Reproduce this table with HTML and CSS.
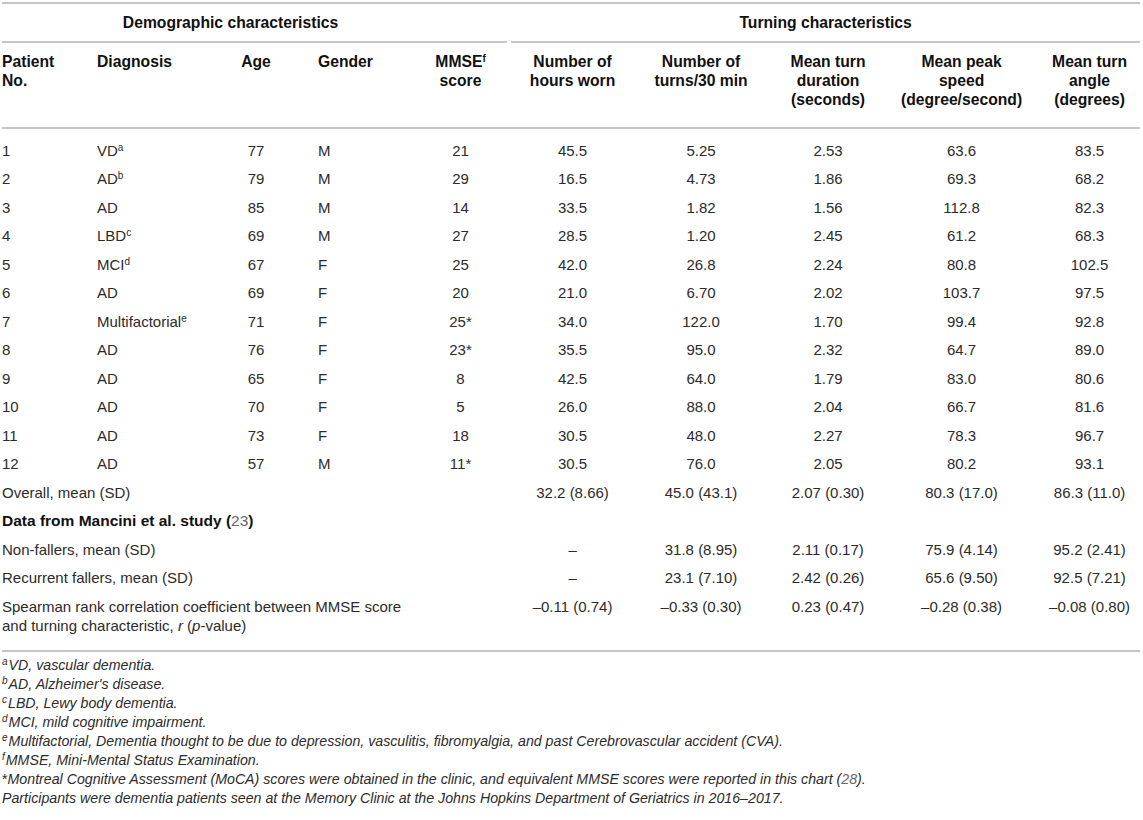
FILE: index.html
```html
<!DOCTYPE html>
<html lang="en">
<head>
<meta charset="utf-8">
<title>Table</title>
<link rel="stylesheet" href="styles.css">
</head>
<body>
<div class="page">
<table class="tbl">
  <colgroup>
    <col class="c-pt"><col class="c-dx"><col class="c-age"><col class="c-sex"><col class="c-mmse">
    <col class="c-hrs"><col class="c-trn"><col class="c-dur"><col class="c-spd"><col class="c-ang">
  </colgroup>
  <thead>
    <tr>
      <th colspan="5" class="grp grp-l"><div>Demographic characteristics</div></th>
      <th colspan="5" class="grp grp-r"><div>Turning characteristics</div></th>
    </tr>
    <tr class="hdr">
      <th class="l">Patient<br>No.</th>
      <th class="l">Diagnosis</th>
      <th class="c">Age</th>
      <th class="l sex">Gender</th>
      <th class="c">MMSE<sup>f</sup><br>score</th>
      <th class="c">Number of<br>hours worn</th>
      <th class="c">Number of<br>turns/30 min</th>
      <th class="c">Mean turn<br>duration<br>(seconds)</th>
      <th class="c">Mean peak<br>speed<br>(degree/second)</th>
      <th class="c ang">Mean turn<br>angle<br>(degrees)</th>
    </tr>
  </thead>
  <tbody>
    <tr class="first"><td class="l">1</td><td class="l">VD<sup>a</sup></td><td class="c">77</td><td class="l sex">M</td><td class="c">21</td><td class="c">45.5</td><td class="c">5.25</td><td class="c">2.53</td><td class="c">63.6</td><td class="c ang">83.5</td></tr>
    <tr><td class="l">2</td><td class="l">AD<sup>b</sup></td><td class="c">79</td><td class="l sex">M</td><td class="c">29</td><td class="c">16.5</td><td class="c">4.73</td><td class="c">1.86</td><td class="c">69.3</td><td class="c ang">68.2</td></tr>
    <tr><td class="l">3</td><td class="l">AD</td><td class="c">85</td><td class="l sex">M</td><td class="c">14</td><td class="c">33.5</td><td class="c">1.82</td><td class="c">1.56</td><td class="c">112.8</td><td class="c ang">82.3</td></tr>
    <tr><td class="l">4</td><td class="l">LBD<sup>c</sup></td><td class="c">69</td><td class="l sex">M</td><td class="c">27</td><td class="c">28.5</td><td class="c">1.20</td><td class="c">2.45</td><td class="c">61.2</td><td class="c ang">68.3</td></tr>
    <tr><td class="l">5</td><td class="l">MCI<sup>d</sup></td><td class="c">67</td><td class="l sex">F</td><td class="c">25</td><td class="c">42.0</td><td class="c">26.8</td><td class="c">2.24</td><td class="c">80.8</td><td class="c ang">102.5</td></tr>
    <tr><td class="l">6</td><td class="l">AD</td><td class="c">69</td><td class="l sex">F</td><td class="c">20</td><td class="c">21.0</td><td class="c">6.70</td><td class="c">2.02</td><td class="c">103.7</td><td class="c ang">97.5</td></tr>
    <tr><td class="l">7</td><td class="l">Multifactorial<sup>e</sup></td><td class="c">71</td><td class="l sex">F</td><td class="c">25*</td><td class="c">34.0</td><td class="c">122.0</td><td class="c">1.70</td><td class="c">99.4</td><td class="c ang">92.8</td></tr>
    <tr><td class="l">8</td><td class="l">AD</td><td class="c">76</td><td class="l sex">F</td><td class="c">23*</td><td class="c">35.5</td><td class="c">95.0</td><td class="c">2.32</td><td class="c">64.7</td><td class="c ang">89.0</td></tr>
    <tr><td class="l">9</td><td class="l">AD</td><td class="c">65</td><td class="l sex">F</td><td class="c">8</td><td class="c">42.5</td><td class="c">64.0</td><td class="c">1.79</td><td class="c">83.0</td><td class="c ang">80.6</td></tr>
    <tr><td class="l">10</td><td class="l">AD</td><td class="c">70</td><td class="l sex">F</td><td class="c">5</td><td class="c">26.0</td><td class="c">88.0</td><td class="c">2.04</td><td class="c">66.7</td><td class="c ang">81.6</td></tr>
    <tr><td class="l">11</td><td class="l">AD</td><td class="c">73</td><td class="l sex">F</td><td class="c">18</td><td class="c">30.5</td><td class="c">48.0</td><td class="c">2.27</td><td class="c">78.3</td><td class="c ang">96.7</td></tr>
    <tr><td class="l">12</td><td class="l">AD</td><td class="c">57</td><td class="l sex">M</td><td class="c">11*</td><td class="c">30.5</td><td class="c">76.0</td><td class="c">2.05</td><td class="c">80.2</td><td class="c ang">93.1</td></tr>
    <tr><td class="l" colspan="5">Overall, mean (SD)</td><td class="c">32.2 (8.66)</td><td class="c">45.0 (43.1)</td><td class="c">2.07 (0.30)</td><td class="c">80.3 (17.0)</td><td class="c ang">86.3 (11.0)</td></tr>
    <tr><td class="l sect" colspan="10">Data from Mancini et al. study (<a class="ref">23</a>)</td></tr>
    <tr><td class="l" colspan="5">Non-fallers, mean (SD)</td><td class="c">–</td><td class="c">31.8 (8.95)</td><td class="c">2.11 (0.17)</td><td class="c">75.9 (4.14)</td><td class="c ang">95.2 (2.41)</td></tr>
    <tr><td class="l" colspan="5">Recurrent fallers, mean (SD)</td><td class="c">–</td><td class="c">23.1 (7.10)</td><td class="c">2.42 (0.26)</td><td class="c">65.6 (9.50)</td><td class="c ang">92.5 (7.21)</td></tr>
    <tr class="last"><td class="l" colspan="5">Spearman rank correlation coefficient between MMSE score<br>and turning characteristic, <i>r</i> (<i>p</i>-value)</td><td class="c">–0.11 (0.74)</td><td class="c">–0.33 (0.30)</td><td class="c">0.23 (0.47)</td><td class="c">–0.28 (0.38)</td><td class="c ang">–0.08 (0.80)</td></tr>
  </tbody>
</table>
<div class="notes">
  <p><sup>a</sup>VD, vascular dementia.</p>
  <p><sup>b</sup>AD, Alzheimer's disease.</p>
  <p><sup>c</sup>LBD, Lewy body dementia.</p>
  <p><sup>d</sup>MCI, mild cognitive impairment.</p>
  <p><sup>e</sup>Multifactorial, Dementia thought to be due to depression, vasculitis, fibromyalgia, and past Cerebrovascular accident (CVA).</p>
  <p><sup>f</sup>MMSE, Mini-Mental Status Examination.</p>
  <p><span class="ast">*</span>Montreal Cognitive Assessment (MoCA) scores were obtained in the clinic, and equivalent MMSE scores were reported in this chart (<a class="ref">28</a>).</p>
  <p>Participants were dementia patients seen at the Memory Clinic at the Johns Hopkins Department of Geriatrics in 2016–2017.</p>
</div>
</div>
</body>
</html>
```

FILE: styles.css
```css
html, body {
  margin: 0;
  padding: 0;
  background: #fff;
}

.page {
  padding: 2px 3px 0 2px;
  font-family: "Liberation Sans", Arial, sans-serif;
  font-size: 15px;
  line-height: 19px;
  color: #2b2b2b;
}

.tbl {
  width: 1138px;
  table-layout: fixed;
  border-collapse: separate;
  border-spacing: 0;
}

.c-pt { width: 95px; }
.c-dx { width: 115px; }
.c-age { width: 88px; }
.c-sex { width: 112px; }
.c-mmse { width: 97px; }
.c-hrs { width: 127px; }
.c-trn { width: 130px; }
.c-dur { width: 124px; }
.c-spd { width: 143px; }
.c-ang { width: 107px; }

.tbl th, .tbl td {
  padding: 0;
  vertical-align: top;
  white-space: nowrap;
}

.tbl th {
  font-weight: bold;
  font-size: 15.7px;
  color: #111;
}

.l { text-align: left; }
.c { text-align: center; }
.sex { padding-left: 18px !important; }
.ang { padding-left: 6px !important; }

.grp {
  border-top: 2px solid #c6c6c6;
  text-align: center;
}
.grp div {
  padding: 9px 0;
  border-bottom: 2px solid #c6c6c6;
}
.grp-l div {
  margin-right: 2px;
  padding-right: 48px;
}
.grp-r div {
  margin-left: 2px;
}

.hdr th {
  padding-top: 9px;
  padding-bottom: 18px;
  border-bottom: 2px solid #c6c6c6;
}

.tbl td {
  padding-top: 4.75px;
  padding-bottom: 4.75px;
}
.tbl tr.first td {
  padding-top: 11.5px;
}
.tbl tr.last td {
  padding-bottom: 15.5px;
  border-bottom: 2px solid #c6c6c6;
}

.sect {
  font-weight: bold;
  font-size: 15.5px;
  color: #111;
}

.ref {
  color: #666;
  font-weight: normal;
  text-decoration: none;
}

sup {
  font-size: 10px;
  line-height: 0;
  vertical-align: 5px;
}

.notes {
  margin-top: 4px;
  font-style: italic;
  font-size: 14.2px;
  line-height: 19px;
  color: #2b2b2b;
}
.notes p {
  margin: 0;
}
.notes sup {
  font-size: 10px;
  margin-right: 1px;
}
.notes .ast {
  font-style: normal;
}
```
